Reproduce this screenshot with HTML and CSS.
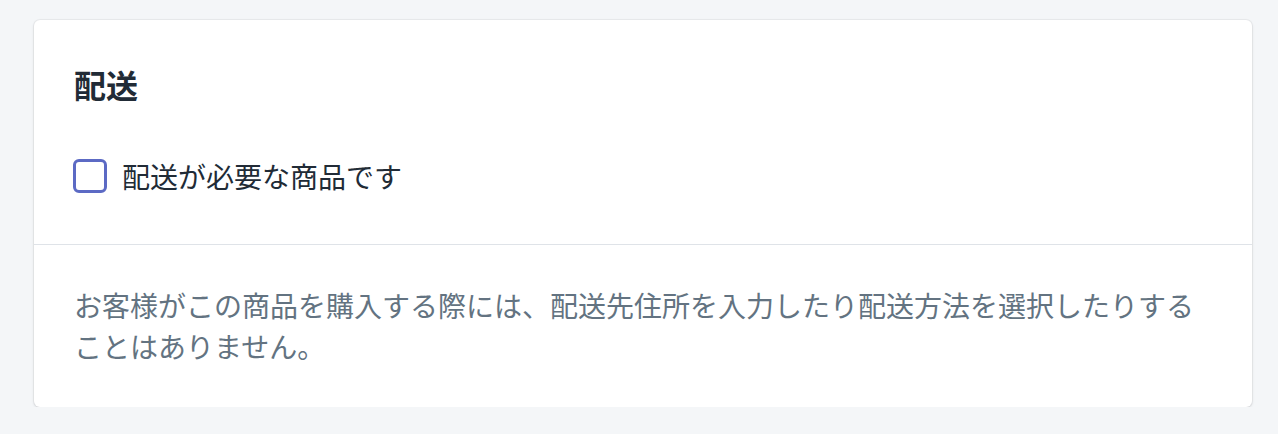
FILE: index.html
```html
<!DOCTYPE html>
<html lang="ja">
<head>
<meta charset="utf-8">
<link rel="stylesheet" href="styles.css">
</head>
<body>
<div class="card">
  <div class="card-header">
    <h2 class="card-title">配送</h2>
  </div>
  <div class="card-section section-main">
    <label class="checkbox-row">
      <span class="checkbox"></span>
      <span class="checkbox-label">配送が必要な商品です</span>
    </label>
  </div>
  <div class="card-section section-note">
    <p class="note">お客様がこの商品を購入する際には、配送先住所を入力したり配送方法を選択したりすることはありません。</p>
  </div>
</div>
</body>
</html>
```
FILE: styles.css
```css
html, body {
  margin: 0;
  padding: 0;
  background: #f4f6f8;
}
body {
  padding: 20px 26px 0 34px;
  font-family: "Noto Sans CJK JP", "Noto Sans", sans-serif;
  color: #212b36;
}
.card {
  background: #ffffff;
  border-radius: 6px;
  box-shadow: 0 0 0 1px rgba(63, 63, 68, 0.05), 0 1px 3px 0 rgba(63, 63, 68, 0.15);
  width: 1218px;
  box-sizing: border-box;
}
.card-header {
  padding: 40px 40px 0;
}
.card-title {
  margin: 0;
  font-size: 32px;
  line-height: 48px;
  font-weight: 700;
  color: #212b36;
}
.card-section {
  padding: 40px;
}
.section-main {
  padding: 48px 40px 48px 39px;
}
.section-note {
  border-top: 1px solid #dfe3e8;
  padding: 40px 40px 40px;
}
.checkbox-row {
  display: flex;
  align-items: center;
  gap: 15px;
  height: 40px;
}
.checkbox {
  width: 34px;
  height: 34px;
  box-sizing: border-box;
  border: 3px solid #5c6ac4;
  border-radius: 6px;
  background: #ffffff;
  flex: none;
}
.checkbox-label {
  font-size: 28px;
  line-height: 40px;
  color: #212b36;
}
.note {
  margin: 0;
  font-size: 28px;
  line-height: 41px;
  color: #637381;
}
```
